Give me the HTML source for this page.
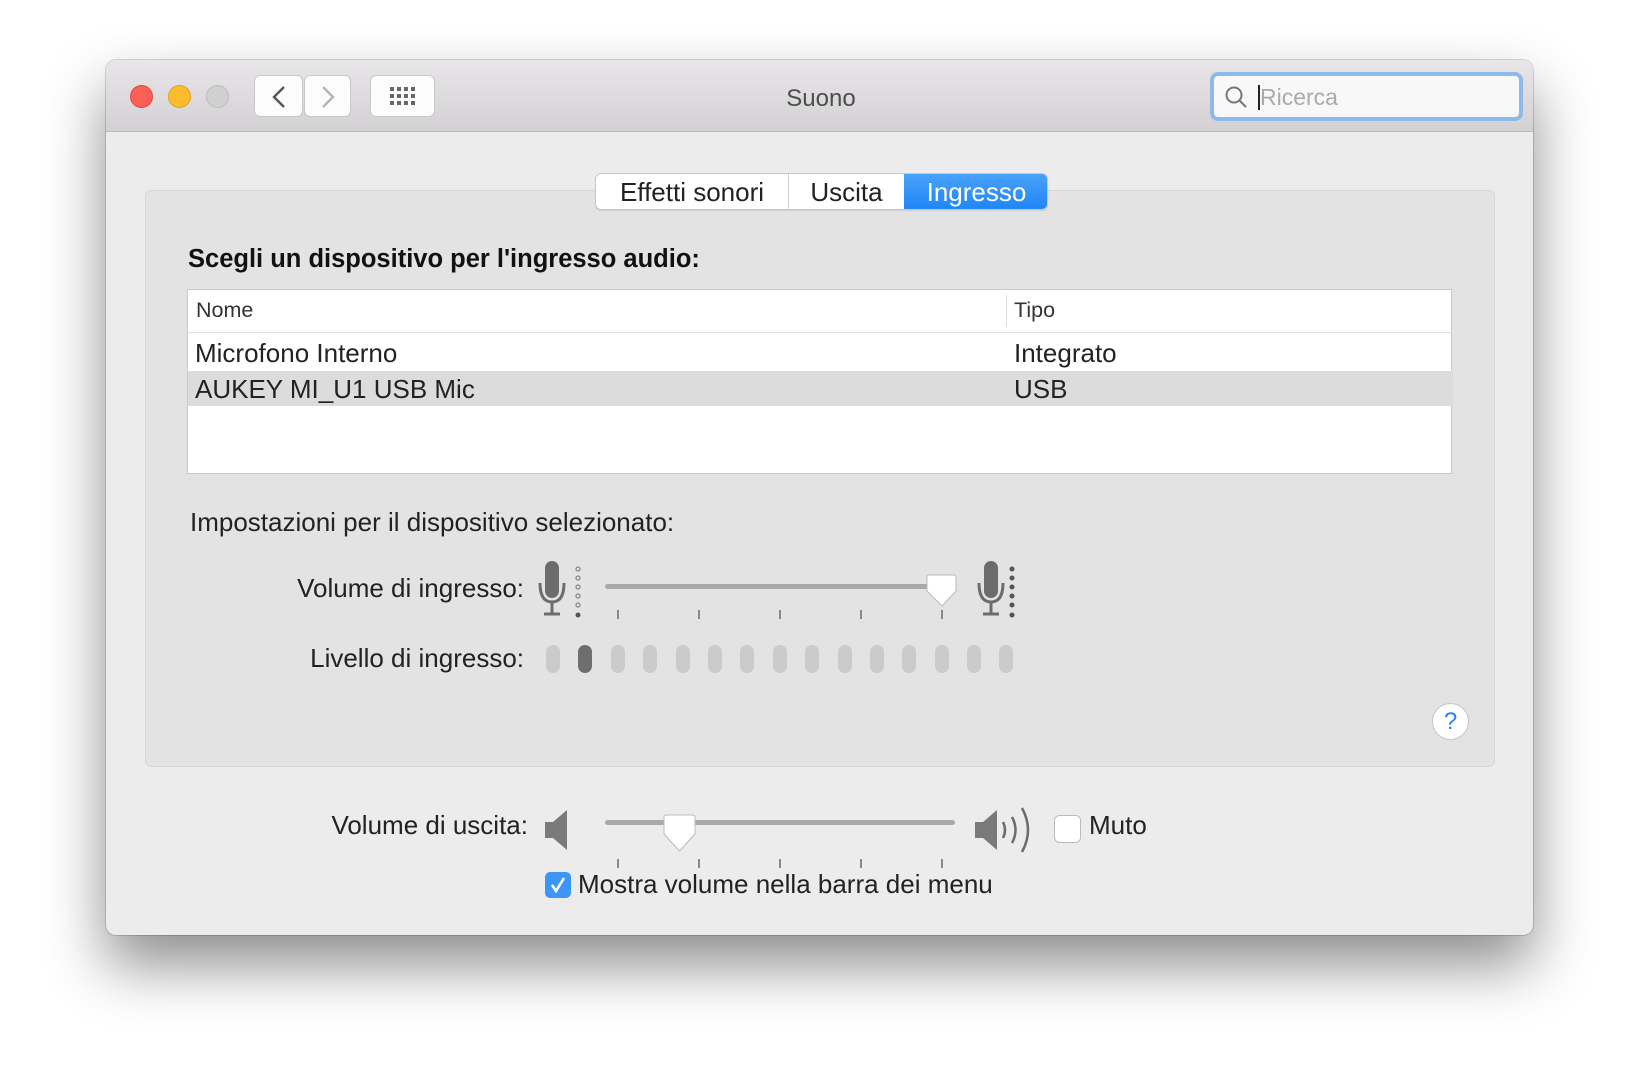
<!DOCTYPE html>
<html><head><meta charset="utf-8"><style>
*{margin:0;padding:0;box-sizing:border-box}
body{width:1640px;height:1088px;background:#fff;position:relative;overflow:hidden;font-family:"Liberation Sans",Arial,sans-serif;color:#222}
.a{position:absolute}
.win{left:106px;top:60px;width:1427px;height:875px;background:#ececec;border-radius:10px;box-shadow:0 30px 60px rgba(0,0,0,.45),0 0 0 1px rgba(0,0,0,.15);overflow:hidden}
.tb{left:0;top:0;width:1427px;height:72px;background:linear-gradient(#e8e6e8,#d3d1d3);border-bottom:1px solid #b9b9b9}
.dot{width:23px;height:23px;border-radius:50%;top:25px}
.btn{background:#fcfcfc;border:1px solid #c8c8c8;border-radius:6px;height:42px;top:15px}
.t{font-size:26px;white-space:nowrap}
.bar{width:14px;height:28px;border-radius:7px;background:#cbcbcb;top:645px}
</style></head><body>
<div class="a win">
 <div class="a tb">
  <div class="a dot" style="left:24px;background:#fc5f57;border:1px solid #de4a42"></div>
  <div class="a dot" style="left:62px;background:#fdbc2e;border:1px solid #dea123"></div>
  <div class="a dot" style="left:100px;background:#d0d0d0;border:1px solid #bdbdbd"></div>
  <div class="a btn" style="left:148px;width:49px"><svg width="49" height="42"><path d="M29 11 L19 21 L29 31" stroke="#555" stroke-width="2.4" fill="none"/></svg></div>
  <div class="a btn" style="left:198px;width:47px"><svg width="47" height="42"><path d="M18 11 L28 21 L18 31" stroke="#b5b5b5" stroke-width="2.4" fill="none"/></svg></div>
  <div class="a btn" style="left:264px;width:65px"><svg width="65" height="42"><g fill="#666">
   <rect x="19" y="11" width="4" height="4"/><rect x="26" y="11" width="4" height="4"/><rect x="33" y="11" width="4" height="4"/><rect x="40" y="11" width="4" height="4"/>
   <rect x="19" y="18" width="4" height="4"/><rect x="26" y="18" width="4" height="4"/><rect x="33" y="18" width="4" height="4"/><rect x="40" y="18" width="4" height="4"/>
   <rect x="19" y="25" width="4" height="4"/><rect x="26" y="25" width="4" height="4"/><rect x="33" y="25" width="4" height="4"/><rect x="40" y="25" width="4" height="4"/></g></svg></div>
  <div class="a t" style="left:0;width:1430px;text-align:center;top:25px;color:#4d4d4d;font-size:24px">Suono</div>
  <div class="a" style="left:1104px;top:12px;width:313px;height:49px;border:4px solid #8fb9ea;border-radius:8px;background:#f8f8f8">
   <svg class="a" style="left:10px;top:9px" width="26" height="26"><circle cx="10" cy="10" r="7.5" stroke="#777" stroke-width="2" fill="none"/><path d="M15.5 15.5 L22 22" stroke="#777" stroke-width="2"/></svg>
   <div class="a" style="left:44px;top:9px;width:2px;height:25px;background:#222"></div>
   <div class="a t" style="left:46px;top:8px;color:#aaa;font-size:23px">Ricerca</div>
  </div>
 </div>
 <div class="a" style="left:39px;top:130px;width:1350px;height:577px;background:#e3e3e3;border:1px solid #d6d6d6;border-radius:6px"></div>
 <div class="a" style="left:489px;top:113px;width:453px;height:37px;background:#fff;border:1px solid #c8c8c8;border-radius:6px;box-shadow:0 1px 1px rgba(0,0,0,.1);overflow:hidden">
  <div class="a t" style="left:0;width:192px;text-align:center;top:3px">Effetti sonori</div>
  <div class="a" style="left:192px;top:0;width:1px;height:37px;background:#d0d0d0"></div>
  <div class="a t" style="left:193px;width:115px;text-align:center;top:3px">Uscita</div>
  <div class="a" style="left:308px;top:-1px;width:145px;height:39px;background:linear-gradient(#4aa3fb,#1c84f6)"></div>
  <div class="a t" style="left:308px;width:145px;text-align:center;top:3px;color:#fff">Ingresso</div>
 </div>
 <div class="a t" style="left:82px;top:185px;font-weight:bold;font-size:25.5px;color:#111">Scegli un dispositivo per l'ingresso audio:</div>
 <div class="a" style="left:81px;top:229px;width:1265px;height:185px;background:#fff;border:1px solid #c9c9c9">
  <div class="a t" style="left:8px;top:8px;font-size:21.5px;color:#333">Nome</div>
  <div class="a" style="left:818px;top:5px;width:1px;height:32px;background:#ddd"></div>
  <div class="a t" style="left:826px;top:8px;font-size:21.5px;color:#333">Tipo</div>
  <div class="a" style="left:0;top:42px;width:1265px;height:1px;background:#ddd"></div>
  <div class="a t" style="left:7px;top:48px">Microfono Interno</div>
  <div class="a t" style="left:826px;top:48px">Integrato</div>
  <div class="a" style="left:0;top:81px;width:1265px;height:35px;background:#dcdcdc"></div>
  <div class="a t" style="left:7px;top:84px">AUKEY MI_U1 USB Mic</div>
  <div class="a t" style="left:826px;top:84px">USB</div>
 </div>
 <div class="a t" style="left:84px;top:447px">Impostazioni per il dispositivo selezionato:</div>
 <div class="a t" style="left:0;width:418px;text-align:right;top:513px">Volume di ingresso:</div>
 <div class="a t" style="left:0;width:418px;text-align:right;top:583px">Livello di ingresso:</div>
 <div class="a t" style="left:0;width:422px;text-align:right;top:750px">Volume di uscita:</div>
 <div class="a t" style="left:983px;top:750px">Muto</div>
 <div class="a t" style="left:472px;top:809px">Mostra volume nella barra dei menu</div>
 <div class="a" style="left:1326px;top:643px;width:37px;height:37px;border-radius:50%;background:#fff;border:1px solid #c5c5c5;color:#2f7ef6;font-size:24px;text-align:center;line-height:35px">?</div>
</div>
<svg class="a" style="left:537px;top:555px" width="480" height="70">
 <rect x="8" y="6" width="14" height="37" rx="7" fill="#6c6c6c"/>
 <path d="M3 28 Q3 47 15 47 Q27 47 27 28" stroke="#6c6c6c" stroke-width="3" fill="none"/>
 <path d="M15 47 V58 M7 59 H23" stroke="#6c6c6c" stroke-width="3"/>
 <g fill="none" stroke="#888" stroke-width="1.3"><circle cx="41" cy="14" r="2"/><circle cx="41" cy="23" r="2"/><circle cx="41" cy="32" r="2"/><circle cx="41" cy="41" r="2"/><circle cx="41" cy="50" r="2"/></g>
 <circle cx="41" cy="60" r="2.5" fill="#555"/>
 <rect x="68" y="29" width="350" height="5" rx="2.5" fill="#a9a9a9"/>
 <g fill="#888"><rect x="80" y="55" width="2" height="9"/><rect x="161" y="55" width="2" height="9"/><rect x="242" y="55" width="2" height="9"/><rect x="323" y="55" width="2" height="9"/><rect x="404" y="55" width="2" height="9"/></g>
 <path d="M390 22 Q390 20 393 20 H416 Q419 20 419 22 V36 L405 51 L390 36 Z" fill="#fff" stroke="#bbb" stroke-width="1"/>
 <rect x="447" y="6" width="14" height="37" rx="7" fill="#6c6c6c"/>
 <path d="M442 28 Q442 47 454 47 Q466 47 466 28" stroke="#6c6c6c" stroke-width="3" fill="none"/>
 <path d="M454 47 V58 M446 59 H462" stroke="#6c6c6c" stroke-width="3"/>
 <g fill="#555"><circle cx="475" cy="14" r="2.5"/><circle cx="475" cy="23" r="2.5"/><circle cx="475" cy="32" r="2.5"/><circle cx="475" cy="41" r="2.5"/><circle cx="475" cy="50" r="2.5"/><circle cx="475" cy="60" r="2.5"/></g>
</svg>
<div class="a bar" style="left:546px"></div><div class="a bar" style="left:578px;background:#6e6e6e"></div>
<div class="a bar" style="left:611px"></div><div class="a bar" style="left:643px"></div><div class="a bar" style="left:676px"></div>
<div class="a bar" style="left:708px"></div><div class="a bar" style="left:740px"></div><div class="a bar" style="left:773px"></div>
<div class="a bar" style="left:805px"></div><div class="a bar" style="left:838px"></div><div class="a bar" style="left:870px"></div>
<div class="a bar" style="left:902px"></div><div class="a bar" style="left:935px"></div><div class="a bar" style="left:967px"></div>
<div class="a bar" style="left:999px"></div>
<svg class="a" style="left:535px;top:800px" width="560" height="75">
 <path d="M10 22 H18 L32 10 V50 L18 38 H10 Z" fill="#7a7a7a"/>
 <rect x="70" y="20" width="350" height="5" rx="2.5" fill="#a9a9a9"/>
 <g fill="#888"><rect x="82" y="59" width="2" height="9"/><rect x="163" y="59" width="2" height="9"/><rect x="244" y="59" width="2" height="9"/><rect x="325" y="59" width="2" height="9"/><rect x="406" y="59" width="2" height="9"/></g>
 <path d="M129 17 Q129 15 132 15 H157 Q160 15 160 17 V34 L144.5 51 L129 34 Z" fill="#fff" stroke="#bbb" stroke-width="1"/>
 <path d="M440 22 H448 L462 10 V50 L448 38 H440 Z" fill="#7a7a7a"/>
 <path d="M468 22 Q472 30 468 38 M477 17 Q484 30 477 43 M487 8 Q499 30 487 52" stroke="#6c6c6c" stroke-width="2.5" fill="none"/>
 <rect x="519.5" y="15.5" width="26" height="27" rx="5" fill="#fff" stroke="#bbb"/>
</svg>
<div class="a" style="left:545px;top:872px;width:26px;height:26px;border-radius:5px;background:#3d95f7">
 <svg width="26" height="26"><path d="M7 13 L11 19 L19 6" stroke="#fff" stroke-width="2.5" fill="none"/></svg>
</div>
</body></html>
